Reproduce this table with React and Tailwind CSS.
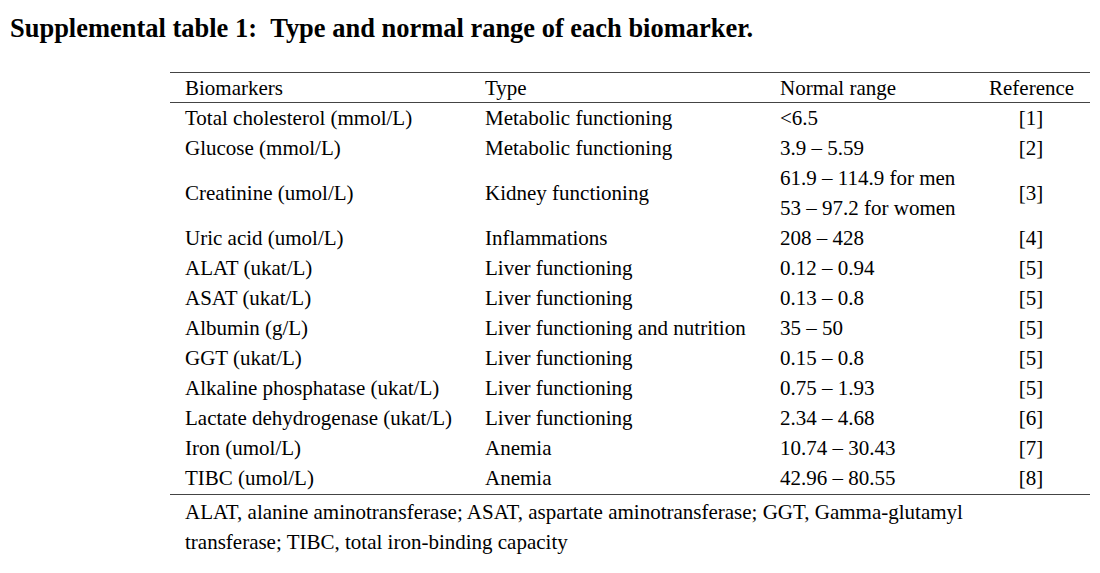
import React from "react";

const rows = [
  ["Total cholesterol (mmol/L)", "Metabolic functioning", ["<6.5"], "[1]"],
  ["Glucose (mmol/L)", "Metabolic functioning", ["3.9 – 5.59"], "[2]"],
  ["Creatinine (umol/L)", "Kidney functioning", ["61.9 – 114.9 for men", "53 – 97.2 for women"], "[3]"],
  ["Uric acid (umol/L)", "Inflammations", ["208 – 428"], "[4]"],
  ["ALAT (ukat/L)", "Liver functioning", ["0.12 – 0.94"], "[5]"],
  ["ASAT (ukat/L)", "Liver functioning", ["0.13 – 0.8"], "[5]"],
  ["Albumin (g/L)", "Liver functioning and nutrition", ["35 – 50"], "[5]"],
  ["GGT (ukat/L)", "Liver functioning", ["0.15 – 0.8"], "[5]"],
  ["Alkaline phosphatase (ukat/L)", "Liver functioning", ["0.75 – 1.93"], "[5]"],
  ["Lactate dehydrogenase (ukat/L)", "Liver functioning", ["2.34 – 4.68"], "[6]"],
  ["Iron (umol/L)", "Anemia", ["10.74 – 30.43"], "[7]"],
  ["TIBC (umol/L)", "Anemia", ["42.96 – 80.55"], "[8]"],
];

export default function App() {
  return (
    <div className="w-[1100px] h-[573px] bg-white text-black overflow-hidden font-['Liberation_Serif','Times_New_Roman',serif]">
      <div className="h-[72px] pl-[10px] pt-[12px]">
        <h1 className="inline-block origin-left scale-x-[0.945] whitespace-nowrap text-[28px] leading-[32px] font-bold">
          Supplemental table 1:&nbsp;&nbsp;Type and normal range of each biomarker.
        </h1>
      </div>
      <div className="ml-[170px] w-[920px] text-[21px] leading-[30px]">
        <div className="border-t border-b border-[#444] grid grid-cols-[300px_295px_209px_84px] pl-[15px] h-[31px] items-center">
          <div>Biomarkers</div>
          <div>Type</div>
          <div>Normal range</div>
          <div className="text-center whitespace-nowrap">Reference</div>
        </div>
        <div className="border-b border-[#444] pb-[1px]">
          {rows.map((r, i) => (
            <div key={i} className="grid grid-cols-[300px_295px_209px_84px] pl-[15px] items-center">
              <div>{r[0]}</div>
              <div>{r[1]}</div>
              <div>
                {r[2].map((t, j) => (
                  <div key={j}>{t}</div>
                ))}
              </div>
              <div className="text-center">{r[3]}</div>
            </div>
          ))}
        </div>
        <div className="pl-[15px] pt-[2px]">
          <div>ALAT, alanine aminotransferase; ASAT, aspartate aminotransferase; GGT, Gamma-glutamyl</div>
          <div>transferase; TIBC, total iron-binding capacity</div>
        </div>
      </div>
    </div>
  );
}
